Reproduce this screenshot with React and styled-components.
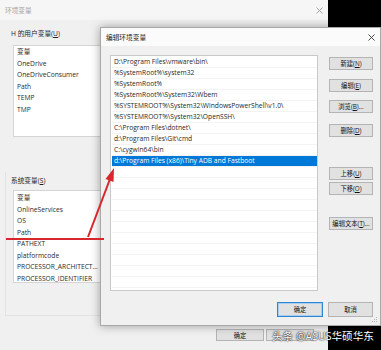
import React from "react";
import styled, { createGlobalStyle } from "styled-components";

const GlobalStyle = createGlobalStyle`
  html, body {
    margin: 0;
    padding: 0;
    background: #000;
  }
`;

const userVars = ["变量", "OneDrive", "OneDriveConsumer", "Path", "TEMP", "TMP"];
const systemVars = [
  "变量",
  "OnlineServices",
  "OS",
  "Path",
  "PATHEXT",
  "platformcode",
  "PROCESSOR_ARCHITECT...",
  "PROCESSOR_IDENTIFIER",
];
const paths = [
  "D:\\Program Files\\vmware\\bin\\",
  "%SystemRoot%\\system32",
  "%SystemRoot%",
  "%SystemRoot%\\System32\\Wbem",
  "%SYSTEMROOT%\\System32\\WindowsPowerShell\\v1.0\\",
  "%SYSTEMROOT%\\System32\\OpenSSH\\",
  "C:\\Program Files\\dotnet\\",
  "d:\\Program Files\\Git\\cmd",
  "C:\\cygwin64\\bin",
  "d:\\Program Files (x86)\\Tiny ADB and Fastboot",
];
const sideButtons = [
  { label: "新建", key: "N", top: 0 },
  { label: "编辑", key: "E", top: 9 },
  { label: "浏览", key: "B", tail: "...", top: 8 },
  { label: "删除", key: "D", top: 11 },
  { label: "上移", key: "U", top: 30 },
  { label: "下移", key: "O", top: 2 },
  { label: "编辑文本", key: "T", tail: "...", top: 22 },
];

const Desktop = styled.div`
  position: relative;
  width: 381px;
  height: 350px;
  overflow: hidden;
  background: #000;
  font-family: "Open Sans", "Noto Sans CJK SC", sans-serif;
  font-size: 6.7px;
  color: #1b1b1b;
`;

const BackWindow = styled.div`
  position: absolute;
  left: 0;
  top: 0;
  width: 328px;
  height: 360px;
  background: #f0f0f0;
  display: flex;
  flex-direction: column;
`;

const TitleBar = styled.div`
  height: ${(p) => p.$h}px;
  flex-shrink: 0;
  display: flex;
  align-items: center;
  justify-content: space-between;
  padding: 0 5px;
  background: ${(p) => (p.$active ? "#fbfbfb" : "#f6f6f6")};
  color: ${(p) => (p.$active ? "#222" : "#a3a3a3")};
`;

const BackBody = styled.div`
  padding: 9px 0 0 5px;
  display: flex;
  flex-direction: column;
`;

const Section = styled.div`
  padding-left: 6px;
  display: flex;
  flex-direction: column;
`;

const SystemGroup = styled.div`
  margin-top: 35px;
  padding: 4px 0 32px 5px;
  border-left: 1px solid #e2e2e2;
  border-bottom: 1px solid #e2e2e2;
  width: 300px;
  display: flex;
  flex-direction: column;
`;

const Label = styled.div`
  height: 10px;
  line-height: 10px;
  color: #222;
`;

const VarList = styled.div`
  box-sizing: border-box;
  margin: ${(p) => p.$gap}px 0 0 2px;
  width: 290px;
  height: ${(p) => p.$h}px;
  background: #fff;
  border: 1px solid #d4d4d4;
  padding: ${(p) => p.$pad}px 0 0 3px;
  overflow: hidden;
`;

const VarRow = styled.div`
  height: 11.5px;
  line-height: 11.5px;
  white-space: nowrap;
  color: #2a2a2a;
`;

const BackFooter = styled.div`
  margin-top: 13px;
  padding-right: 14px;
  display: flex;
  justify-content: flex-end;
  gap: 2px;
`;

const Button = styled.div`
  box-sizing: border-box;
  width: ${(p) => p.$w}px;
  height: ${(p) => p.$h}px;
  margin-top: ${(p) => p.$top || 0}px;
  background: #e1e1e1;
  border: 1px solid ${(p) => (p.$primary ? "#2b86d4" : "#b4b4b4")};
  box-shadow: ${(p) => (p.$primary ? "inset 0 0 0 1px #a9cdee" : "none")};
  display: flex;
  align-items: center;
  justify-content: center;
  font-size: 6.3px;
  color: #111;
  white-space: nowrap;
`;

const Dialog = styled.div`
  position: absolute;
  left: 100px;
  top: 27px;
  width: 281px;
  height: 299px;
  box-sizing: border-box;
  background: #f0f0f0;
  border: 1px solid #a8a8a8;
  box-shadow: 0 0 9px rgba(0, 0, 0, 0.35);
  display: flex;
  flex-direction: column;
`;

const DialogBody = styled.div`
  display: flex;
  padding: 9px 0 0 9px;
`;

const PathList = styled.div`
  box-sizing: border-box;
  width: 208px;
  height: 236px;
  background: #fff;
  border: 1px solid #c9c9c9;
  padding: 1px 0 0 1px;
  overflow: hidden;
`;

const PathRow = styled.div`
  box-sizing: border-box;
  height: 11px;
  line-height: 10px;
  padding-left: 2px;
  white-space: nowrap;
  border-bottom: 1px solid #f3f3f3;
  background: ${(p) => (p.$selected ? "#0078d7" : "transparent")};
  color: ${(p) => (p.$selected ? "#fff" : "#1f1f1f")};
`;

const ButtonColumn = styled.div`
  margin-left: 11px;
  padding-top: 2px;
  display: flex;
  flex-direction: column;
`;

const DialogFooter = styled.div`
  margin-top: 11px;
  padding-right: 7px;
  display: flex;
  justify-content: flex-end;
  gap: 5px;
`;

const Grip = styled.svg`
  position: absolute;
  right: 2px;
  bottom: 2px;
`;

const Overlay = styled.svg`
  position: absolute;
  left: 0;
  top: 0;
  pointer-events: none;
`;

const Watermark = styled.div`
  position: absolute;
  left: 272px;
  top: 329px;
  font-size: 10.6px;
  line-height: 14px;
  color: #fff;
  white-space: nowrap;
  text-shadow: 0 0 2px rgba(0, 0, 0, 0.9), 0 0 1px #000;
`;

const Close = ({ color }) => (
  <svg width="7" height="7" viewBox="0 0 7 7">
    <path d="M0.5 0.5 L6.5 6.5 M6.5 0.5 L0.5 6.5" stroke={color} strokeWidth="0.9" />
  </svg>
);

const Key = ({ label, k, tail }) => (
  <span>
    {label}(<u>{k}</u>){tail}
  </span>
);

export default function App() {
  const emptyRows = Array.from({ length: 12 });
  return (
    <>
      <GlobalStyle />
      <Desktop>
        <BackWindow>
          <TitleBar $h={20}>
            <span>环境变量</span>
            <Close color="#9a9a9a" />
          </TitleBar>
          <BackBody>
            <Section>
              <Label>
                H 的用户变量(<u>U</u>)
              </Label>
              <VarList $gap={6} $h={92} $pad={0}>
                {userVars.map((v) => (
                  <VarRow key={v}>{v}</VarRow>
                ))}
              </VarList>
            </Section>
            <SystemGroup>
              <Label>
                系统变量(<u>S</u>)
              </Label>
              <VarList $gap={4} $h={93} $pad={1}>
                {systemVars.map((v) => (
                  <VarRow key={v}>{v}</VarRow>
                ))}
              </VarList>
            </SystemGroup>
          </BackBody>
          <BackFooter>
            <Button $w={48} $h={12}>确定</Button>
            <Button $w={48} $h={12} />
          </BackFooter>
        </BackWindow>

        <Dialog>
          <TitleBar $h={18} $active>
            <span>编辑环境变量</span>
            <Close color="#333" />
          </TitleBar>
          <DialogBody>
            <PathList>
              {paths.map((p, i) => (
                <PathRow key={p} $selected={i === paths.length - 1}>
                  {p}
                </PathRow>
              ))}
              {emptyRows.map((_, i) => (
                <PathRow key={"e" + i} />
              ))}
            </PathList>
            <ButtonColumn>
              {sideButtons.map((b) => (
                <Button key={b.key} $w={44} $h={13} $top={b.top}>
                  <Key label={b.label} k={b.key} tail={b.tail} />
                </Button>
              ))}
            </ButtonColumn>
          </DialogBody>
          <DialogFooter>
            <Button $w={46} $h={15} $primary>
              确定
            </Button>
            <Button $w={45} $h={15}>
              取消
            </Button>
          </DialogFooter>
          <Grip width="6" height="6" viewBox="0 0 6 6">
            <g fill="#b5b5b5">
              <rect x="4" y="0" width="1" height="1" />
              <rect x="2" y="2" width="1" height="1" />
              <rect x="4" y="2" width="1" height="1" />
              <rect x="0" y="4" width="1" height="1" />
              <rect x="2" y="4" width="1" height="1" />
              <rect x="4" y="4" width="1" height="1" />
            </g>
          </Grip>
        </Dialog>

        <Overlay width="381" height="350" viewBox="0 0 381 350">
          <line x1="6" y1="239" x2="104" y2="239" stroke="#d8262c" strokeWidth="2" />
          <line x1="88" y1="237" x2="110" y2="179" stroke="#d8262c" strokeWidth="2" />
          <polygon points="114,168 105.5,179 113.5,182" fill="#d8262c" />
        </Overlay>

        <Watermark>头条 @ASUS华硕华东</Watermark>
      </Desktop>
    </>
  );
}
